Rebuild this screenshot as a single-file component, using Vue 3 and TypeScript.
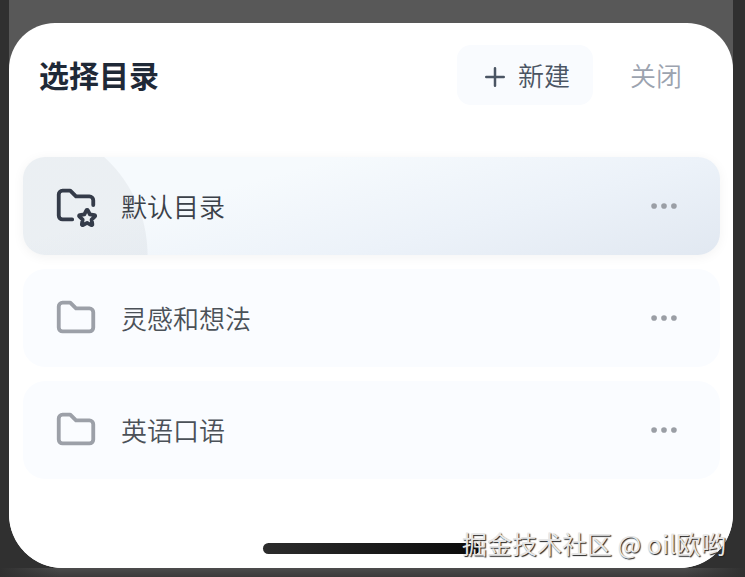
<script setup lang="ts">
import { ref } from 'vue'

interface Folder {
  id: number
  name: string
  starred: boolean
}

const folders = ref<Folder[]>([
  { id: 1, name: '默认目录', starred: true },
  { id: 2, name: '灵感和想法', starred: false },
  { id: 3, name: '英语口语', starred: false },
])
const selectedId = ref(1)
</script>

<template>
  <div class="device">
    <div class="screen">
      <main class="sheet">
        <header class="header">
          <h1 class="title">选择目录</h1>
          <div class="actions">
            <button type="button" class="action create">
              <svg class="plus" viewBox="0 0 24 24" aria-hidden="true">
                <path d="M12 5v14M5 12h14" />
              </svg>
              <span class="label">新建</span>
            </button>
            <button type="button" class="action close">
              <span class="label">关闭</span>
            </button>
          </div>
        </header>

        <ul class="list">
          <li
            v-for="folder in folders"
            :key="folder.id"
            class="row"
            :class="{ selected: folder.id === selectedId }"
          >
            <button type="button" class="pick" @click="selectedId = folder.id">
              <svg class="folder" viewBox="0 0 24 24" aria-hidden="true">
                <template v-if="folder.starred">
                  <path d="M10 19H5a2 2 0 0 1-2-2V6a2 2 0 0 1 2-2h4l3 3h7a2 2 0 0 1 2 2v2.5" />
                  <path d="M17.8 20.817l-2.172 1.138a.392.392 0 0 1-.568-.41l.415-2.411-1.757-1.707a.389.389 0 0 1 .217-.665l2.428-.352 1.086-2.193a.392.392 0 0 1 .702 0l1.086 2.193 2.428.352a.39.39 0 0 1 .217.665l-1.757 1.707.414 2.41a.39.39 0 0 1-.567.411z" />
                </template>
                <path v-else d="M5 4h4l3 3h7a2 2 0 0 1 2 2v8a2 2 0 0 1-2 2H5a2 2 0 0 1-2-2V6a2 2 0 0 1 2-2" />
              </svg>
              <span class="name">{{ folder.name }}</span>
            </button>
            <button type="button" class="more" :aria-label="`${folder.name} 更多`">
              <svg class="dots" viewBox="0 0 24 24" aria-hidden="true">
                <circle cx="5" cy="12" r="2" />
                <circle cx="12" cy="12" r="2" />
                <circle cx="19" cy="12" r="2" />
              </svg>
            </button>
          </li>
        </ul>

        <div class="home-bar"></div>
      </main>
    </div>
    <p class="watermark">掘金技术社区 @ oil欧哟</p>
  </div>
</template>

<style>
body {
  margin: 0;
  background: #303030;
}
</style>

<style scoped>
.device {
  position: relative;
  box-sizing: border-box;
  min-height: 100vh;
  padding: 0 12px 9px 9px;
  display: flex;
  background:
    linear-gradient(to right, #303030, transparent 60px, transparent calc(100% - 60px), #303030),
    linear-gradient(to top, #3c3a3b, #4c4c4c 9px, #303030 9px);
  font-family: "Noto Sans CJK SC", sans-serif;
}

.screen {
  flex: 1;
  display: flex;
  padding-top: 23px;
  border-radius: 0 0 54px 54px;
  background: linear-gradient(#585858 50%, #ffffff 50%);
}

.sheet {
  flex: 1;
  display: flex;
  flex-direction: column;
  padding: 22px 13px 14px 14px;
  border-radius: 46px 46px 54px 54px;
  background: #ffffff;
}

.header {
  display: flex;
  align-items: center;
  justify-content: space-between;
  padding: 0 15px 0 16px;
  margin-bottom: 52px;
}

.title {
  margin: 0;
  padding-bottom: 2px;
  font-size: 30px;
  line-height: 58px;
  font-weight: 700;
  color: #1f2937;
}

.actions {
  display: flex;
  gap: 14px;
}

button {
  margin: 0;
  padding: 0;
  border: 0;
  background: none;
  font: inherit;
  color: inherit;
  cursor: pointer;
}

.action {
  box-sizing: border-box;
  display: flex;
  align-items: center;
  gap: 8px;
  height: 60px;
  padding: 3px 23px 0;
  border-radius: 14px;
  font-size: 26px;
  font-weight: 350;
}

.label {
  padding-bottom: 4px;
}

.create {
  background: #f9fbfe;
  color: #4b5563;
}

.close {
  color: #9ca3af;
}

svg {
  flex: none;
  fill: none;
  stroke: currentColor;
  stroke-width: 2;
  stroke-linecap: round;
  stroke-linejoin: round;
}

.plus {
  width: 30px;
  height: 30px;
}

.list {
  display: flex;
  flex-direction: column;
  gap: 14px;
  margin: 0 0 auto;
  padding: 0;
  list-style: none;
}

.row {
  display: flex;
  height: 98px;
  border-radius: 22px;
  background: #fafcff;
  color: #4b5158;
}

.row.selected {
  background:
    radial-gradient(circle at -8px 98px, rgba(31, 41, 55, 0.05) 132px, transparent 133px),
    linear-gradient(165deg, #f6fafd 30%, #ecf2f9 65%, #e1e8f1);
  box-shadow: 0 2px 12px rgba(0, 0, 0, 0.05);
  color: #3b4149;
}

.pick {
  flex: 1;
  display: flex;
  align-items: center;
  gap: 22px;
  padding-left: 30px;
  font-size: 26px;
  font-weight: 350;
  text-align: left;
}

.name {
  padding-bottom: 2px;
}

.folder {
  width: 46px;
  height: 46px;
  color: #9ca0a8;
}

.selected .folder {
  color: #343b49;
}

.more {
  display: flex;
  align-items: center;
  padding: 0 39px;
  color: #9a9ea5;
}

.dots {
  width: 34px;
  height: 34px;
  fill: currentColor;
  stroke: none;
}

.home-bar {
  align-self: center;
  width: 31%;
  height: 11px;
  margin-top: 64px;
  border-radius: 6px;
  background: linear-gradient(to right, #2c2c2c, #0a0a0a);
}

.watermark {
  position: absolute;
  right: 19px;
  bottom: 16px;
  margin: 0;
  font-size: 25px;
  line-height: 36px;
  color: #e6e6e6;
  text-shadow: 1px 1px 1px #222222;
}
</style>
